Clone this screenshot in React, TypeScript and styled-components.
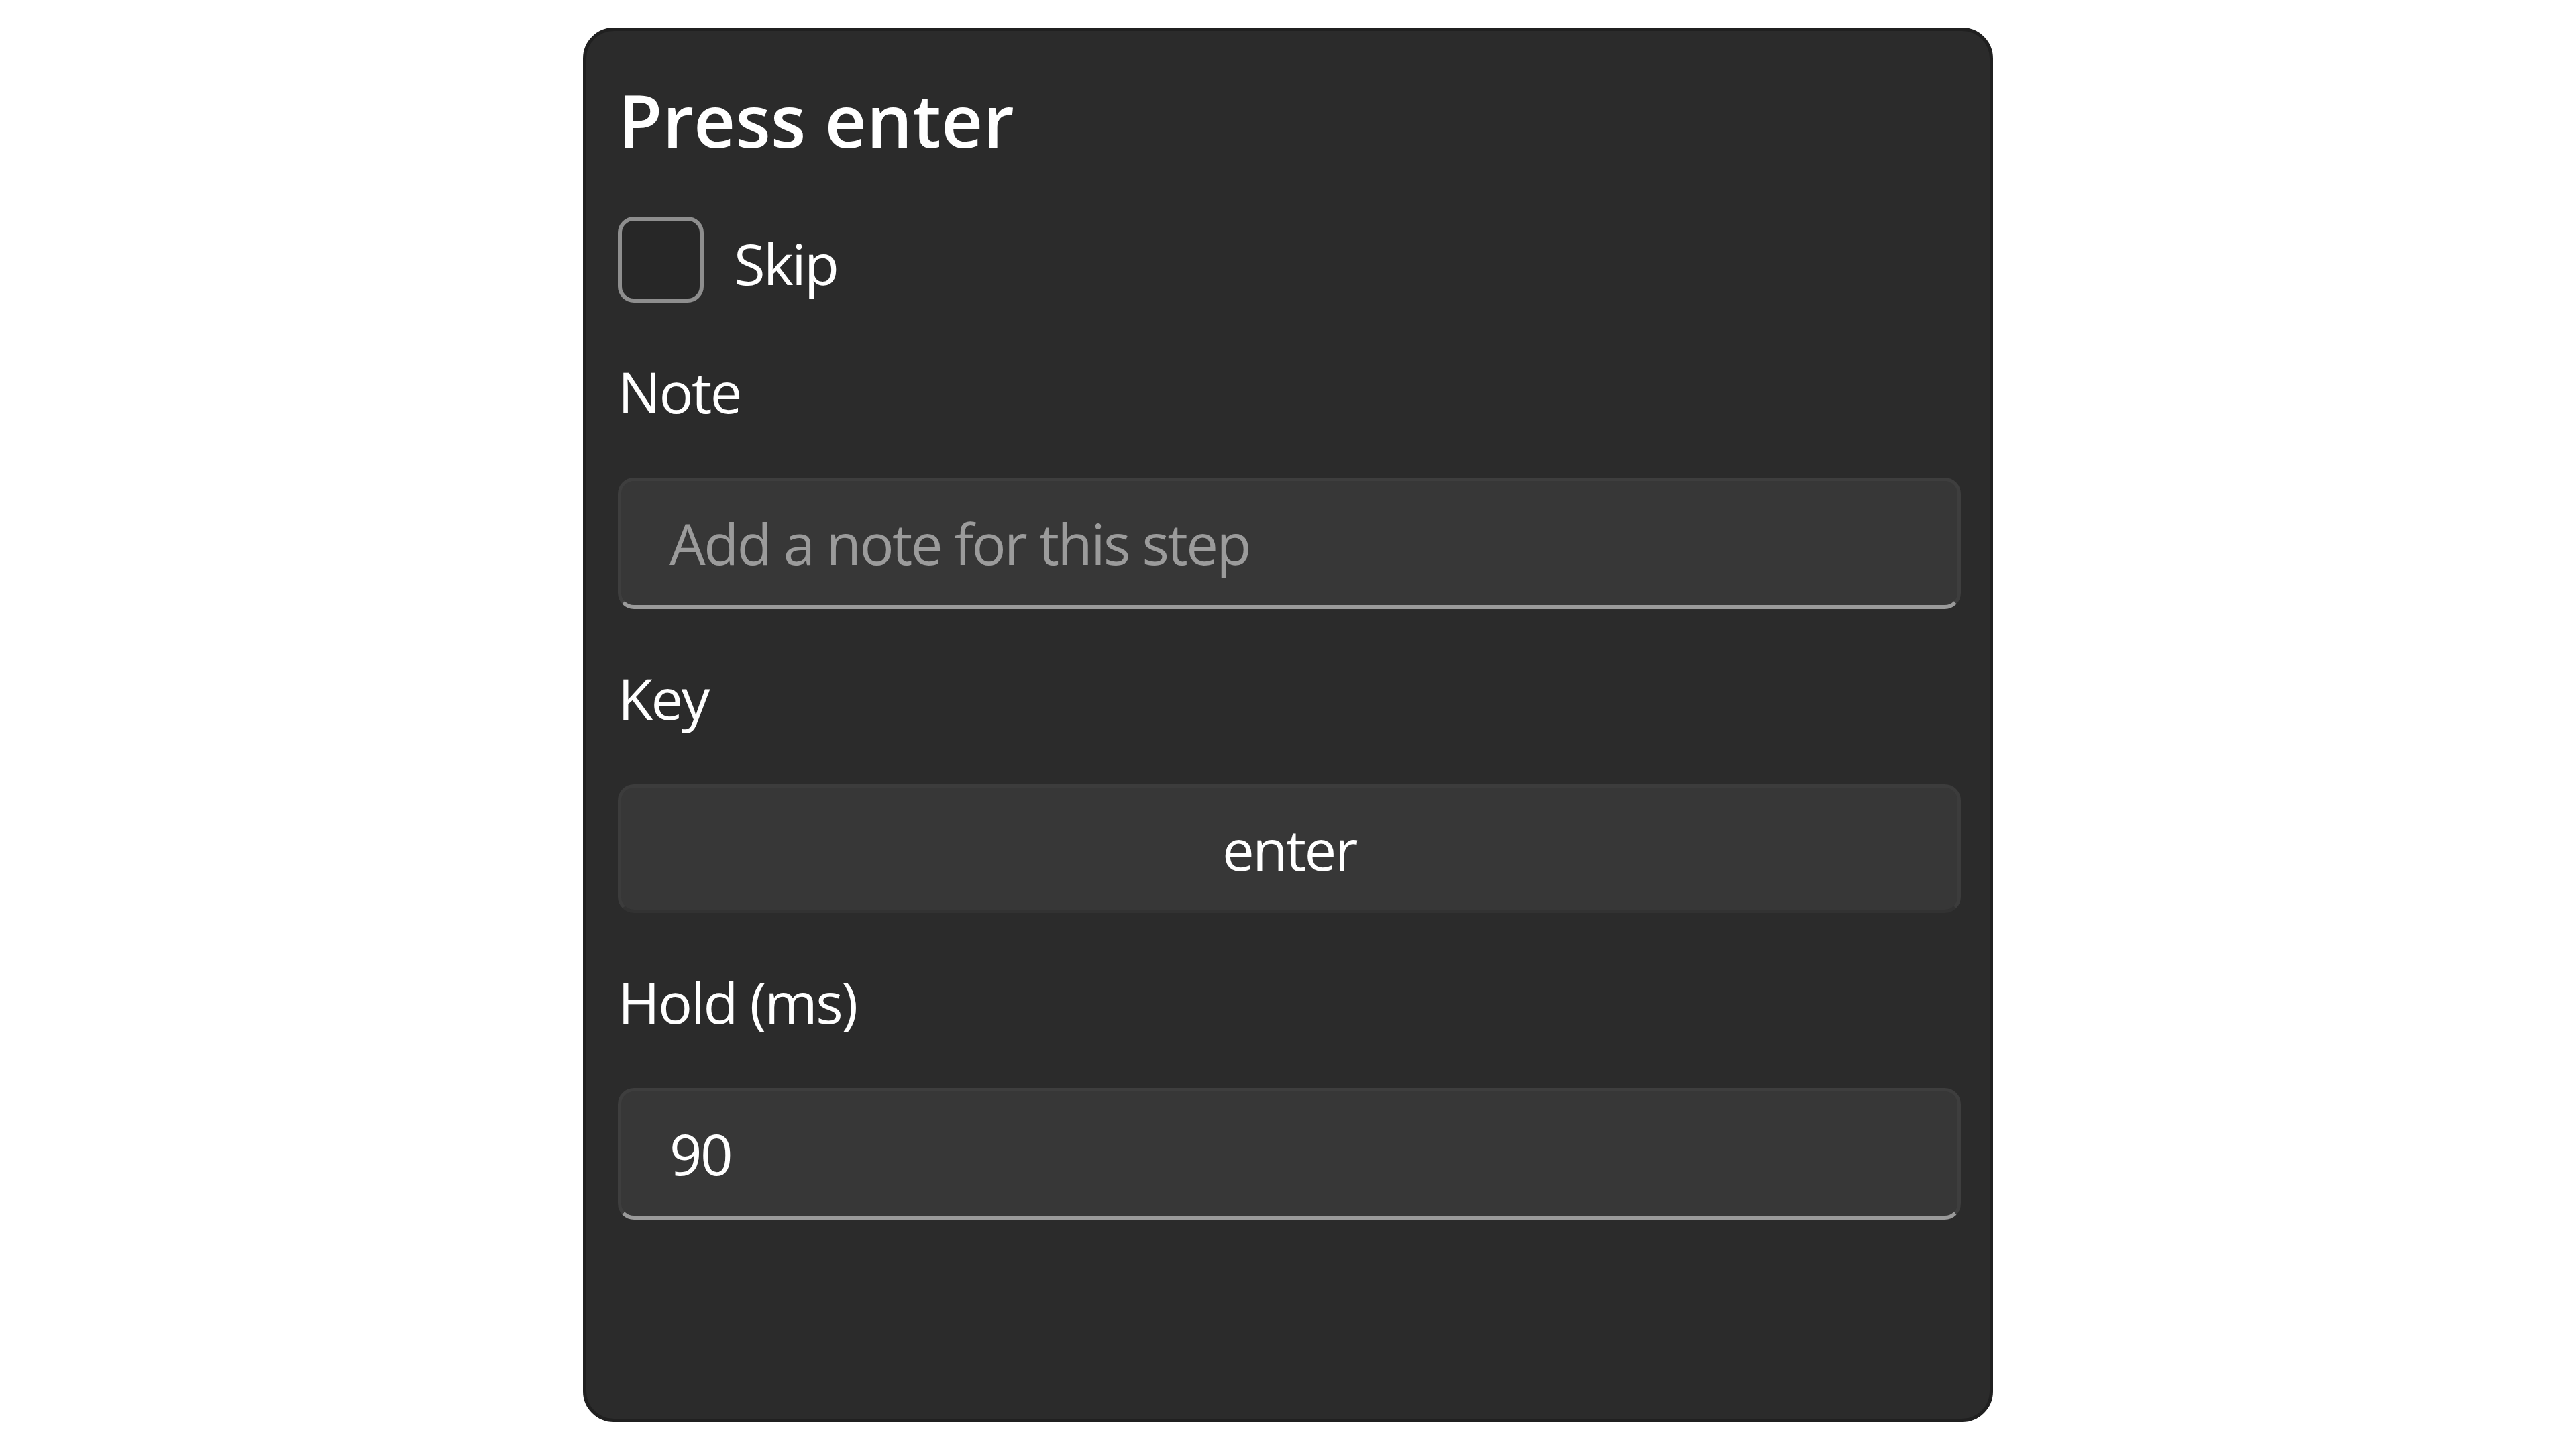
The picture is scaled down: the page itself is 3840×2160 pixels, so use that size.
import React from "react";
import styled, { createGlobalStyle } from "styled-components";

const Global = createGlobalStyle`
  html, body, #root { height: 100%; }
  body {
    margin: 0;
    background: #ffffff;
    font-family: "Open Sans", "Noto Sans", "Liberation Sans", sans-serif;
  }
  * { box-sizing: border-box; }
`;

const Page = styled.div`
  min-height: 100vh;
  display: flex;
  align-items: center;
  justify-content: center;
`;

const Panel = styled.section`
  width: 2102px;
  height: 2079px;
  background: #2b2b2b;
  border: 5px solid #202020;
  border-radius: 46px;
  padding: 79px 43px 0 47px;
  display: flex;
  flex-direction: column;
  gap: 90px;
  color: #ffffff;
`;

const Title = styled.h1`
  margin: 0;
  font-size: 108px;
  line-height: 1;
  font-weight: 600;
  color: #ffffff;
`;

const CheckRow = styled.label`
  display: flex;
  align-items: center;
  gap: 45px;
  height: 128px;
`;

const CheckBox = styled.span`
  width: 128px;
  height: 128px;
  border: 6px solid #8e8e8e;
  border-radius: 24px;
  background: #272727;
  flex: none;
`;

const BodyText = styled.span`
  font-size: 85px;
  line-height: 1;
  letter-spacing: -0.03em;
  color: #ffffff;
  padding-top: 12px;
`;

const Field = styled.div`
  display: flex;
  flex-direction: column;
  gap: 86px;
`;

const Label = styled.div`
  font-size: 85px;
  line-height: 1;
  letter-spacing: -0.03em;
  color: #ffffff;
`;

const TextInput = styled.input`
  width: 100%;
  height: 196px;
  padding: 0 72px;
  background: #373737;
  border: 5px solid #3e3e3e;
  border-bottom: 6px solid #9a9a9a;
  border-radius: 24px;
  color: #ffffff;
  font-family: "Open Sans", "Noto Sans", "Liberation Sans", sans-serif;
  font-size: 85px;
  letter-spacing: -0.03em;
  outline: none;
  &::placeholder {
    color: #9b9b9b;
    opacity: 1;
  }
`;

const KeyButton = styled.button`
  width: 100%;
  height: 192px;
  background: #373737;
  border: 5px solid #3c3c3c;
  border-bottom-color: #323232;
  border-radius: 24px;
  color: #ffffff;
  font-family: "Open Sans", "Noto Sans", "Liberation Sans", sans-serif;
  font-size: 85px;
  letter-spacing: -0.03em;
  display: flex;
  align-items: center;
  justify-content: center;
  padding: 0;
  cursor: pointer;
`;

export default function App() {
  return (
    <>
      <Global />
      <Page>
        <Panel>
          <Title>Press enter</Title>
          <CheckRow>
            <CheckBox />
            <BodyText>Skip</BodyText>
          </CheckRow>
          <Field>
            <Label>Note</Label>
            <TextInput placeholder="Add a note for this step" />
          </Field>
          <Field>
            <Label>Key</Label>
            <KeyButton>enter</KeyButton>
          </Field>
          <Field>
            <Label>Hold (ms)</Label>
            <TextInput defaultValue="90" />
          </Field>
        </Panel>
      </Page>
    </>
  );
}
